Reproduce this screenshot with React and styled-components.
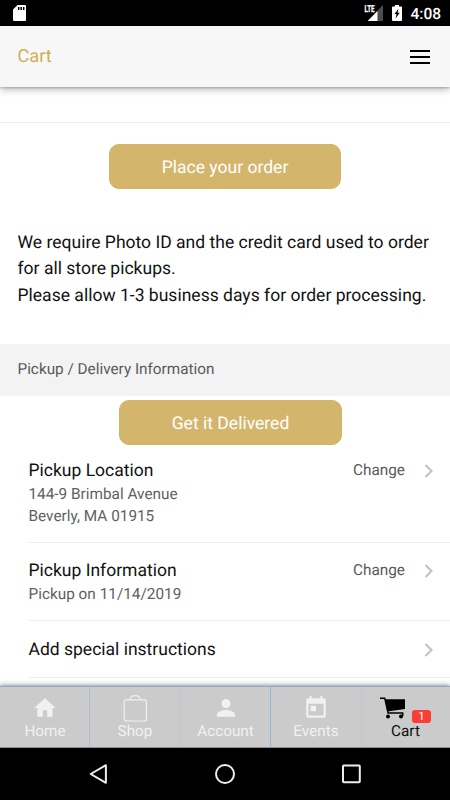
import React from "react";
import styled, { createGlobalStyle } from "styled-components";

export default function App() {
  return (
    <Screen>
      <GlobalStyle />
      <StatusBar>
        <SdIcon />
        <StatusRight>
          <SignalIcon />
          <BatteryIcon />
          <Clock>4:08</Clock>
        </StatusRight>
      </StatusBar>
      <Header>
        <PageTitle>Cart</PageTitle>
        <MenuButton aria-label="Menu">
          <MenuLine />
          <MenuLine />
          <MenuLine />
        </MenuButton>
      </Header>
      <Content>
        <OrderBlock>
          <GoldButton width="232px">Place your order</GoldButton>
        </OrderBlock>
        <Notice>
          We require Photo ID and the credit card used to order
          <br />
          for all store pickups.
          <br />
          Please allow 1-3 business days for order processing.
        </Notice>
        <SectionTitle>Pickup / Delivery Information</SectionTitle>
        <DeliverBlock>
          <GoldButton width="223px">Get it Delivered</GoldButton>
        </DeliverBlock>
        <List>
          <Row height="98px" top="14px">
            <RowText>
              <RowTitle>Pickup Location</RowTitle>
              <RowDetail>144-9 Brimbal Avenue</RowDetail>
              <RowDetail>Beverly, MA 01915</RowDetail>
            </RowText>
            <Change>Change</Change>
            <Chevron />
          </Row>
          <Row height="78px" top="16px">
            <RowText>
              <RowTitle>Pickup Information</RowTitle>
              <RowDetail>Pickup on 11/14/2019</RowDetail>
            </RowText>
            <Change>Change</Change>
            <Chevron />
          </Row>
          <Row height="57px" top="17px">
            <RowText>
              <RowTitle>Add special instructions</RowTitle>
            </RowText>
            <Chevron />
          </Row>
        </List>
      </Content>
      <TabBar>
        <Tab>
          <HomeIcon />
          <TabLabel>Home</TabLabel>
        </Tab>
        <Tab edge="#a9bfd8">
          <BagIcon />
          <TabLabel>Shop</TabLabel>
        </Tab>
        <Tab edge="#bcc6d0">
          <PersonIcon />
          <TabLabel>Account</TabLabel>
        </Tab>
        <Tab edge="#8fb4e0">
          <CalendarIcon />
          <TabLabel>Events</TabLabel>
        </Tab>
        <Tab edge="#bcc6d0" $active>
          <CartIcon />
          <TabLabel>Cart</TabLabel>
          <Badge>1</Badge>
        </Tab>
      </TabBar>
      <NavBar>
        <svg width="20" height="22" viewBox="0 0 20 22">
          <path d="M17.9 2.2v17.6L2.7 11z" fill="none" stroke="#eee" strokeWidth="2" strokeLinejoin="round" />
        </svg>
        <svg width="22" height="22" viewBox="0 0 22 22">
          <circle cx="11" cy="11" r="9" fill="none" stroke="#eee" strokeWidth="2" />
        </svg>
        <svg width="20" height="22" viewBox="0 0 20 22">
          <rect x="2" y="2.5" width="16.8" height="16.8" rx="0.8" fill="none" stroke="#eee" strokeWidth="2" />
        </svg>
      </NavBar>
    </Screen>
  );
}

const SdIcon = () => (
  <svg width="13" height="16" viewBox="0 0 13 16">
    <path d="M4.6 0H12a1 1 0 0 1 1 1v14a1 1 0 0 1-1 1H1a1 1 0 0 1-1-1V4.6z" fill="#fff" />
    <path d="M5.7 2v3M8.2 2v3M10.7 2v3" stroke="#000" strokeWidth="1.5" />
  </svg>
);

const SignalIcon = () => (
  <SignalSvg width="19" height="16" viewBox="0 0 19 16">
    <path d="M19 0v16h-5V5z" fill="#4d4d4d" />
    <path d="M13.6 5.8V16h-10z" fill="#fff" />
    <text x="0.5" y="7.4" fill="#fff" stroke="#fff" strokeWidth="0.3" fontFamily="Roboto, sans-serif" fontSize="9.5" fontWeight="700" textLength="10" lengthAdjust="spacingAndGlyphs">
      LTE
    </text>
  </SignalSvg>
);

const BatteryIcon = () => (
  <svg width="10" height="16" viewBox="0 0 10 16">
    <path d="M3 0h4v1.4h2a1 1 0 0 1 1 1V15a1 1 0 0 1-1 1H1a1 1 0 0 1-1-1V2.4a1 1 0 0 1 1-1h2z" fill="#fff" />
    <path d="M6.4 3.8 2.5 9.1h2L3.6 13.5 7.7 7.8H5.6z" fill="#000" />
  </svg>
);

const Chevron = () => (
  <ChevronSvg width="9" height="14" viewBox="0 0 9 14">
    <path d="M1.5 1l6 6-6 6" fill="none" stroke="#c3c3c7" strokeWidth="2.2" />
  </ChevronSvg>
);

const HomeIcon = () => (
  <TabIcon viewBox="0 0 24 24" fill="#f1f1f1">
    <path d="M10 20v-6h4v6h5v-8h3L12 3 2 12h3v8z" />
  </TabIcon>
);

const BagIcon = () => (
  <TabIcon viewBox="0 0 26 28" $tall fill="none" stroke="#f1f1f1" strokeWidth="1.2">
    <rect x="2.2" y="4.8" width="22.2" height="21.2" rx="2" />
    <path d="M7.9 4.8a5.3 4.2 0 0 1 10.6 0" />
  </TabIcon>
);

const PersonIcon = () => (
  <TabIcon viewBox="0 0 24 24" fill="#f1f1f1">
    <path d="M12 12a4.2 4.2 0 1 0 0-8.4A4.2 4.2 0 0 0 12 12zM12 13.8c-3 0-8.300 1.400-8.300 4.300V20h16.600v-1.900c0-2.900-5.300-4.300-8.300-4.300z" />
  </TabIcon>
);

const CalendarIcon = () => (
  <TabIcon viewBox="0 0 24 24" fill="#f1f1f1">
    <path d="M19 3h-1V1h-2v2H8V1H6v2H5a2 2 0 0 0-2 2v14a2 2 0 0 0 2 2h14a2 2 0 0 0 2-2V5a2 2 0 0 0-2-2zm0 16H5V8h14zM7 10h5v5H7z" />
  </TabIcon>
);

const CartIcon = () => (
  <CartSvg width="26" height="22" viewBox="0 0 26 22">
    <path d="M0 1.2h4.7l3.4 14.9h14.6v3" fill="none" stroke="#000" strokeWidth="1.5" />
    <path d="M5 2.3h20v9.6L7.4 14.6z" />
    <circle cx="8" cy="19.4" r="2" />
    <circle cx="21" cy="19.4" r="2" />
  </CartSvg>
);

const GlobalStyle = createGlobalStyle`
  * {
    box-sizing: border-box;
  }

  body {
    margin: 0;
    font-family: Roboto, "Liberation Sans", sans-serif;
    text-rendering: geometricPrecision;
    background: white;
  }

  button {
    text-rendering: inherit;
  }
`;

const Screen = styled.div`
  width: 450px;
  height: 800px;
  display: flex;
  flex-direction: column;
  overflow: hidden;
`;

const StatusBar = styled.div`
  height: 26px;
  flex-shrink: 0;
  display: flex;
  align-items: center;
  justify-content: space-between;
  padding: 0 9px 0 13px;
  background: black;
`;

const StatusRight = styled.div`
  display: flex;
  align-items: center;
`;

const SignalSvg = styled.svg`
  margin-right: 9px;
`;

const Clock = styled.span`
  color: white;
  font-size: 15.5px;
  font-weight: 500;
  line-height: 26px;
  padding-top: 1px;
  margin-left: 8px;
`;

const Header = styled.header`
  height: 61px;
  flex-shrink: 0;
  display: flex;
  align-items: center;
  justify-content: space-between;
  padding: 0 20px 0 17.5px;
  background: #f7f7f7;
  box-shadow: 0 1px 2px rgba(0, 0, 0, 0.2), 0 2px 8px rgba(0, 0, 0, 0.3);
  z-index: 1;
`;

const PageTitle = styled.h1`
  margin: 0;
  color: #cfae56;
  font-size: 18.2px;
  font-weight: 400;
`;

const MenuButton = styled.button`
  width: 20px;
  padding: 0;
  border: none;
  background: none;
  display: flex;
  flex-direction: column;
  gap: 4px;
`;

const MenuLine = styled.span`
  height: 2px;
  background: black;
`;

const Content = styled.main`
  flex: 1;
  min-height: 0;
  padding-top: 35px;
`;

const OrderBlock = styled.div`
  height: 106px;
  padding-top: 21px;
  border-top: 1px solid #ececec;
  display: flex;
  justify-content: center;
  align-items: flex-start;
`;

const GoldButton = styled.button`
  width: ${(props) => props.width};
  height: 45px;
  padding: 2px 0 0;
  border: 1px solid #d3b364;
  border-radius: 10px;
  background: #d4b56c;
  color: white;
  font-family: inherit;
  font-size: 17.55px;
`;

const Notice = styled.p`
  height: 116px;
  margin: 0;
  padding: 2px 0 0 17.5px;
  color: #111;
  font-size: 17.55px;
  line-height: 26.3px;
  white-space: nowrap;
`;

const SectionTitle = styled.h2`
  height: 52px;
  margin: 0;
  padding-left: 17.5px;
  background: #f3f3f3;
  color: #5a5a5a;
  font-size: 15.3px;
  font-weight: 400;
  line-height: 51px;
`;

const DeliverBlock = styled.div`
  height: 49px;
  padding: 4px 0 0 11px;
  display: flex;
  justify-content: center;
`;

const List = styled.div`
  padding-left: 28.5px;
`;

const Row = styled.div`
  height: ${(props) => props.height};
  padding: ${(props) => props.top} 17px 0 0;
  border-bottom: 1px solid #ececec;
  display: flex;
  align-items: flex-start;
`;

const RowText = styled.div`
  flex: 1;
`;

const RowTitle = styled.div`
  height: 24px;
  color: #111;
  font-size: 17.5px;
  line-height: 25px;
`;

const RowDetail = styled.div`
  color: #5f5f5f;
  font-size: 15.35px;
  line-height: 22px;
`;

const Change = styled.span`
  color: #5a5a5a;
  font-size: 15.35px;
  line-height: 23px;
`;

const ChevronSvg = styled.svg`
  margin: 5px 0 0 19px;
`;

const TabBar = styled.nav`
  height: 62px;
  flex-shrink: 0;
  display: grid;
  grid-template-columns: 89px 91px 90px 91px 89px;
  border-top: 1px solid #8fabd0;
  border-bottom: 1px solid #8d8d8d;
  background: #cbcbcb;
  box-shadow: 0 -1px 2px rgba(0, 0, 0, 0.18), 0 -2px 5px rgba(0, 0, 0, 0.22);
  z-index: 1;
`;

const Tab = styled.div`
  position: relative;
  display: flex;
  flex-direction: column;
  align-items: center;
  padding-top: 8px;
  border-left: ${(props) => (props.edge ? `1px solid ${props.edge}` : "none")};
  color: ${(props) => (props.$active ? "#111" : "#f1f1f1")};

  &:first-child {
    padding-left: 1px;
  }

  &:last-child {
    padding-right: 1px;
  }
`;

const TabIcon = styled.svg`
  width: 26px;
  height: ${(props) => (props.$tall ? "28px" : "26px")};
  margin-bottom: ${(props) => (props.$tall ? "-3px" : "-1px")};
`;

const CartSvg = styled.svg`
  margin: 2px 25px 1px 0;
`;

const TabLabel = styled.span`
  font-size: 15.3px;
  line-height: 22px;
`;

const Badge = styled.span`
  position: absolute;
  top: 23px;
  right: 19px;
  width: 19px;
  height: 13px;
  border-radius: 3px;
  background: #f93e36;
  color: white;
  font-size: 11.5px;
  line-height: 13px;
  text-align: center;
`;

const NavBar = styled.div`
  height: 52px;
  flex-shrink: 0;
  display: flex;
  align-items: center;
  justify-content: space-between;
  padding: 0 89px 0 88px;
  background: black;
`;
